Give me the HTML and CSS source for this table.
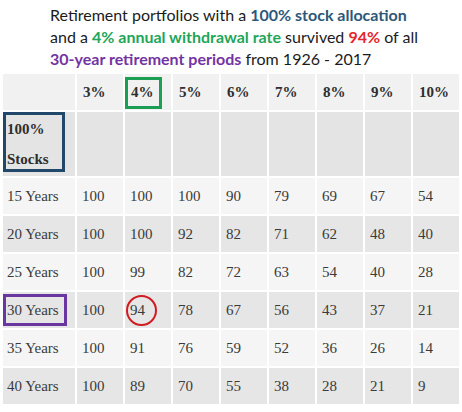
FILE: index.html
```html
<!DOCTYPE html>
<html lang="en">
<head>
<meta charset="utf-8">
<title>Retirement portfolio survival rates</title>
<link rel="stylesheet" href="styles.css">
</head>
<body>
<div class="page">
  <p class="caption">Retirement portfolios with a <b class="c-blue">100% stock allocation</b><br>and a <b class="c-green">4% annual withdrawal rate</b> survived <b class="c-red">94%</b> of all<br><b class="c-purple">30-year retirement periods</b> from 1926 - 2017</p>
  <table class="grid">
    <colgroup><col class="col-label"><col span="8" class="col-rate"></colgroup>
    <thead>
      <tr class="row-head">
        <th></th><th>3%</th><th class="mark"><span class="box box-green"></span>4%</th><th>5%</th><th>6%</th><th>7%</th><th>8%</th><th>9%</th><th>10%</th>
      </tr>
    </thead>
    <tbody>
      <tr class="row-alloc">
        <th class="mark alloc"><span class="box box-blue"></span>100%<br>Stocks</th><td></td><td></td><td></td><td></td><td></td><td></td><td></td><td></td>
      </tr>
      <tr class="row-light"><th>15 Years</th><td>100</td><td>100</td><td>100</td><td>90</td><td>79</td><td>69</td><td>67</td><td>54</td></tr>
      <tr class="row-dark"><th>20 Years</th><td>100</td><td>100</td><td>92</td><td>82</td><td>71</td><td>62</td><td>48</td><td>40</td></tr>
      <tr class="row-light"><th>25 Years</th><td>100</td><td>99</td><td>82</td><td>72</td><td>63</td><td>54</td><td>40</td><td>28</td></tr>
      <tr class="row-dark"><th class="mark"><span class="box box-purple"></span>30 Years</th><td>100</td><td class="mark"><span class="ring"></span>94</td><td>78</td><td>67</td><td>56</td><td>43</td><td>37</td><td>21</td></tr>
      <tr class="row-light"><th>35 Years</th><td>100</td><td>91</td><td>76</td><td>59</td><td>52</td><td>36</td><td>26</td><td>14</td></tr>
      <tr class="row-dark"><th>40 Years</th><td>100</td><td>89</td><td>70</td><td>55</td><td>38</td><td>28</td><td>21</td><td>9</td></tr>
    </tbody>
  </table>
</div>
</body>
</html>
```
FILE: styles.css
```css
html, body {
  margin: 0;
  padding: 0;
  background: #ffffff;
}

.page {
  width: 462px;
  height: 412px;
  overflow: hidden;
  background: #ffffff;
}

.caption {
  margin: 0;
  padding: 4px 0 0 50px;
  height: 74px;
  box-sizing: border-box;
  font-family: "Lato", "Open Sans", sans-serif;
  font-size: 16px;
  line-height: 22px;
  color: #1b1b1b;
}

.caption b { font-weight: 700; }
.c-blue { color: #2c5879; }
.c-green { color: #1fa65a; }
.c-red { color: #e5242b; }
.c-purple { color: #7433a2; }

.grid {
  margin-left: 3px;
  border-collapse: separate;
  border-spacing: 0;
  table-layout: fixed;
  width: 458px;
  font-family: "Liberation Serif", "DejaVu Serif", serif;
  font-size: 15px;
  color: #3a3a3a;
  font-variant-numeric: oldstyle-nums;
}

.col-label { width: 74px; }
.col-rate { width: 48px; }

.grid th,
.grid td {
  box-sizing: border-box;
  border-right: 2px solid #ffffff;
  border-bottom: 2px solid #ffffff;
  padding: 0 0 0 5px;
  text-align: left;
  vertical-align: middle;
  font-weight: 400;
  white-space: nowrap;
}

.grid th { padding-left: 4px; }

.row-head th {
  height: 38px;
  background: #f1f1f1;
  font-weight: 700;
  color: #2e2e2e;
  padding-left: 6px;
}

.row-alloc th,
.row-alloc td {
  height: 66px;
  background: #e4e4e4;
}

.alloc {
  font-weight: 700 !important;
  line-height: 30px;
  color: #2e2e2e;
}

.row-light th,
.row-light td {
  height: 38px;
  background: #f5f5f5;
}

.row-dark th,
.row-dark td {
  height: 38px;
  background: #e6e6e6;
}

.mark { position: relative; }

.box {
  position: absolute;
  box-sizing: border-box;
  pointer-events: none;
}

.box-green {
  left: 0;
  top: 3px;
  width: 37px;
  height: 32px;
  border: 3px solid #1d9e55;
}

.box-blue {
  left: 0;
  top: 0;
  width: 62px;
  height: 60px;
  border: 3px solid #21476b;
}

.box-purple {
  left: 0;
  top: 2px;
  width: 64px;
  height: 32px;
  border: 3px solid #6a36a0;
}

.ring {
  position: absolute;
  left: 1px;
  top: 3px;
  width: 31px;
  height: 31px;
  box-sizing: border-box;
  border: 2.5px solid #d01b21;
  border-radius: 50%;
}
```
